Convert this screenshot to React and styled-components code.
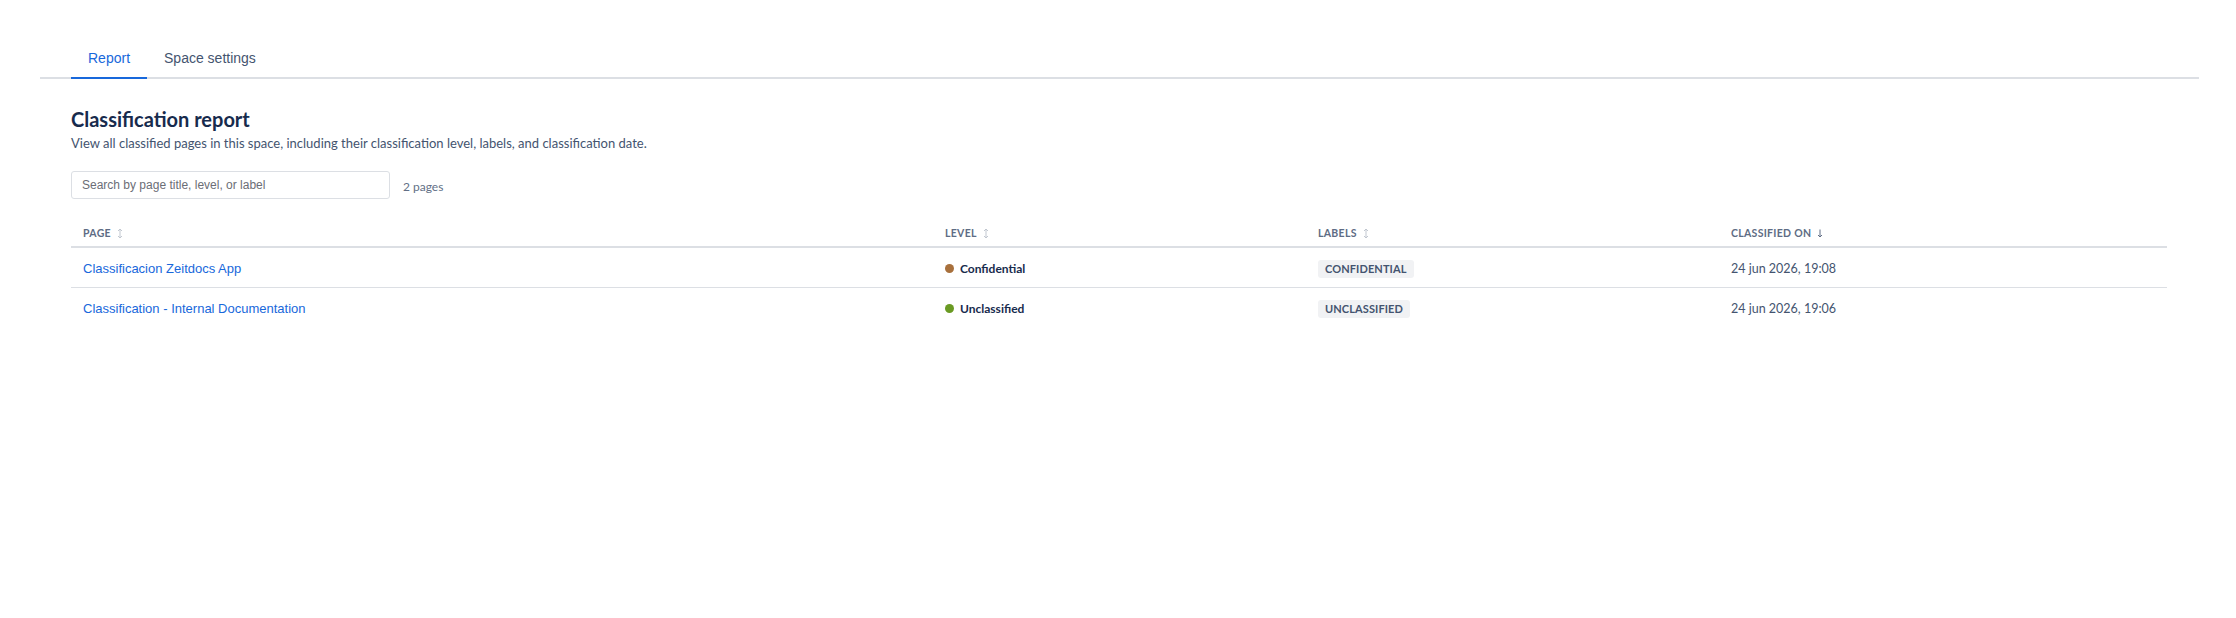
import styled, { createGlobalStyle } from "styled-components";

const GlobalStyle = createGlobalStyle`
  body {
    margin: 0;
    background: #ffffff;
    font-family: Lato, "Noto Sans", sans-serif;
  }
`;

const Page = styled.div`
  padding: 35px 37px 0 40px;
`;

const TabList = styled.div`
  display: flex;
  padding-left: 31px;
  border-bottom: 2px solid #dcdfe4;
`;

const Tab = styled.div`
  position: relative;
  padding: 15px 17px 11px;
  font: 14px/16px "Liberation Sans", Arial, sans-serif;
  color: ${(p) => (p.$active ? "#1868db" : "#44546f")};

  &::after {
    content: "";
    display: ${(p) => (p.$active ? "block" : "none")};
    position: absolute;
    left: 0;
    right: 0;
    bottom: -2px;
    height: 2px;
    background: #1868db;
  }
`;

const Content = styled.div`
  padding: 28px 32px 0 31px;
`;

const Title = styled.h2`
  margin: 0;
  font: 700 20px/24px Lato, sans-serif;
  color: #172b4d;
`;

const Description = styled.p`
  margin: 4px 0 0;
  font: 13px/16px Lato, sans-serif;
  color: #44546f;
`;

const Toolbar = styled.div`
  display: flex;
  align-items: center;
  gap: 13px;
  margin-top: 20px;
`;

const SearchInput = styled.input`
  box-sizing: border-box;
  width: 319px;
  height: 28px;
  padding: 0 10px;
  border: 1px solid #dcdfe4;
  border-radius: 3px;
  font: 12px "Liberation Sans", Arial, sans-serif;
  color: #172b4d;
  outline: none;

  &::placeholder {
    color: #6b6e76;
  }
`;

const Count = styled.span`
  font: 12px Lato, sans-serif;
  color: #626f86;
  padding-top: 2px;
`;

const Table = styled.div`
  margin-top: 16px;
`;

const Row = styled.div`
  display: grid;
  grid-template-columns: 862fr 373fr 413fr 448fr;
  align-items: center;
  border-bottom: ${(p) => (p.$head ? "2px solid #dcdfe4" : "1px solid #dcdfe4")};
  height: ${(p) => (p.$head ? "26px" : "37px")};
  padding-top: ${(p) => (p.$head ? "5px" : "2px")};

  &:last-child {
    border-bottom: none;
  }
`;

const HeadCell = styled.div`
  display: flex;
  align-items: center;
  gap: 6px;
  padding: 0 12px;
  font: 700 10.5px/14px Lato, sans-serif;
  letter-spacing: 0.3px;
  text-transform: uppercase;
  color: #5e6c84;
`;

const Cell = styled.div`
  display: flex;
  align-items: center;
  padding: 0 12px;
`;

const PageLink = styled.a`
  font: 13px/16px "Liberation Sans", Arial, sans-serif;
  color: #1868db;
  text-decoration: none;
`;

const Level = styled.span`
  display: flex;
  align-items: center;
  gap: 6px;
  font: 700 12px/16px Lato, sans-serif;
  color: #172b4d;
`;

const Dot = styled.span`
  width: 9px;
  height: 9px;
  border-radius: 50%;
  background: ${(p) => p.$color};
`;

const Badge = styled.span`
  padding: 2px 7px;
  border-radius: 3px;
  background: #f1f2f4;
  font: 700 11px/14px Lato, sans-serif;
  letter-spacing: 0.1px;
  color: #44546f;
`;

const DateText = styled.span`
  font: 12.5px/16px Lato, sans-serif;
  color: #44546f;
`;

function SortIcon({ dir }) {
  if (dir === "down") {
    return (
      <svg width="6" height="9" viewBox="0 0 6 9">
        <path d="M3 0.5V8M1 6l2 2 2-2" stroke="#5e6c84" strokeWidth="1" fill="none" />
      </svg>
    );
  }
  return (
    <svg width="6" height="11" viewBox="0 0 6 11">
      <path d="M3 1v9M1 3l2-2 2 2M1 8l2 2 2-2" stroke="#c1c7d0" strokeWidth="1" fill="none" />
    </svg>
  );
}

const rows = [
  {
    title: "Classificacion Zeitdocs App",
    level: "Confidential",
    color: "#a8703c",
    label: "CONFIDENTIAL",
    date: "24 jun 2026, 19:08",
  },
  {
    title: "Classification - Internal Documentation",
    level: "Unclassified",
    color: "#6a9a23",
    label: "UNCLASSIFIED",
    date: "24 jun 2026, 19:06",
  },
];

export default function App() {
  return (
    <Page>
      <GlobalStyle />
      <TabList>
        <Tab $active>Report</Tab>
        <Tab>Space settings</Tab>
      </TabList>
      <Content>
        <Title>Classification report</Title>
        <Description>
          View all classified pages in this space, including their classification level, labels, and classification date.
        </Description>
        <Toolbar>
          <SearchInput placeholder="Search by page title, level, or label" />
          <Count>2 pages</Count>
        </Toolbar>
        <Table>
          <Row $head>
            <HeadCell>Page <SortIcon /></HeadCell>
            <HeadCell>Level <SortIcon /></HeadCell>
            <HeadCell>Labels <SortIcon /></HeadCell>
            <HeadCell>Classified on <SortIcon dir="down" /></HeadCell>
          </Row>
          {rows.map((r) => (
            <Row key={r.title}>
              <Cell><PageLink href="#">{r.title}</PageLink></Cell>
              <Cell>
                <Level><Dot $color={r.color} />{r.level}</Level>
              </Cell>
              <Cell><Badge>{r.label}</Badge></Cell>
              <Cell><DateText>{r.date}</DateText></Cell>
            </Row>
          ))}
        </Table>
      </Content>
    </Page>
  );
}
